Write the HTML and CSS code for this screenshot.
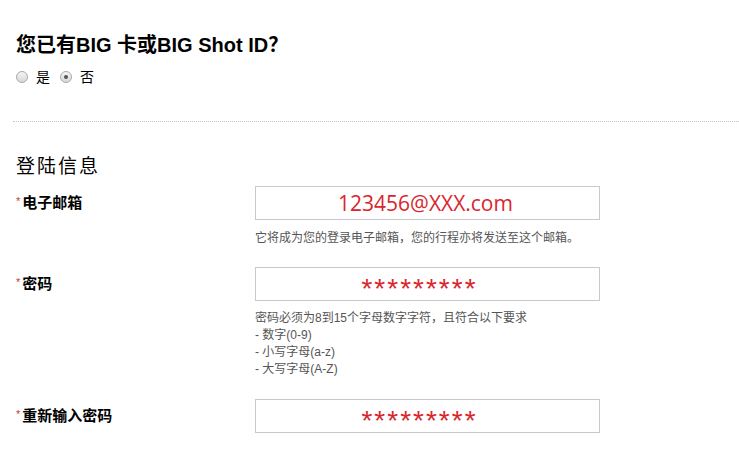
FILE: index.html
```html
<!DOCTYPE html>
<html lang="zh">
<head>
<meta charset="utf-8">
<link rel="stylesheet" href="styles.css">
</head>
<body>
<div class="page">
  <section class="question">
    <h2 class="q-title">您已有BIG 卡或BIG Shot ID？</h2>
    <div class="radios">
      <label class="radio"><span class="dot"></span><span class="rtext">是</span></label>
      <label class="radio"><span class="dot checked"></span><span class="rtext">否</span></label>
    </div>
  </section>
  <hr class="divider">
  <section class="login">
    <h3 class="sec-title">登陆信息</h3>
    <div class="field">
      <div class="label"><span class="req">*</span>电子邮箱</div>
      <div class="control">
        <div class="input email">123456@XXX.com</div>
        <p class="help">它将成为您的登录电子邮箱，您的行程亦将发送至这个邮箱。</p>
      </div>
    </div>
    <div class="field">
      <div class="label"><span class="req">*</span>密码</div>
      <div class="control">
        <div class="input pass">*********</div>
        <ul class="help rules">
          <li>密码必须为8到15个字母数字字符，且符合以下要求</li>
          <li>- 数字(0-9)</li>
          <li>- 小写字母(a-z)</li>
          <li>- 大写字母(A-Z)</li>
        </ul>
      </div>
    </div>
    <div class="field">
      <div class="label"><span class="req">*</span>重新输入密码</div>
      <div class="control">
        <div class="input pass">*********</div>
      </div>
    </div>
  </section>
</div>
</body>
</html>
```
FILE: styles.css
```css
html, body {
  margin: 0;
  padding: 0;
  background: #fff;
}
body {
  font-family: "Liberation Sans", Arial, "Noto Sans CJK SC", sans-serif;
  color: #000;
}
.page {
  padding: 0 0 0 16px;
}
.question {
  padding-top: 33px;
}
.q-title {
  margin: 0;
  font-size: 20px;
  font-weight: bold;
  line-height: 24px;
}
.radios {
  display: flex;
  align-items: center;
  margin-top: 12px;
  height: 16px;
}
.radio {
  display: flex;
  align-items: center;
  font-size: 14px;
  margin-right: 10px;
}
.dot {
  width: 10px;
  height: 10px;
  border: 1px solid #a9a9a9;
  border-radius: 50%;
  background: linear-gradient(#f4f4f4, #d8d8d8);
  position: relative;
  margin-right: 8px;
}
.dot.checked::after {
  content: "";
  position: absolute;
  left: 3px;
  top: 3px;
  width: 4px;
  height: 4px;
  border-radius: 50%;
  background: #555;
}
.rtext {
  line-height: 16px;
}
.divider {
  border: none;
  border-top: 1px dotted #c4c4c4;
  margin: 36px 0 0 -3px;
  height: 0;
}
.sec-title {
  margin: 33px 0 0 0;
  font-size: 19px;
  font-weight: normal;
  letter-spacing: 2px;
  line-height: 24px;
}
.field {
  display: grid;
  grid-template-columns: 239px 345px;
}
.login .field:first-of-type {
  margin-top: 7px;
}
.label {
  font-size: 15px;
  font-weight: bold;
  line-height: 34px;
  padding-left: 0;
}
.req {
  color: #c23a3a;
  font-size: 11px;
  font-weight: normal;
  vertical-align: top;
  line-height: 30px;
  margin-right: 2px;
}
.input {
  box-sizing: border-box;
  height: 34px;
  border: 1px solid #c9c9c9;
  color: #d9262e;
  text-align: center;
  font-family: "Open Sans", "Liberation Sans", sans-serif;
}
.email {
  font-size: 21px;
  line-height: 32px;
  padding-right: 4px;
}
.pass {
  font-family: "Liberation Sans", Arial, sans-serif;
  font-size: 28px;
  letter-spacing: 2px;
  line-height: 42px;
  padding-right: 16px;
}
.help {
  margin: 0;
  font-size: 12px;
  color: #555;
  line-height: 17px;
}
p.help {
  margin-top: 10px;
  margin-bottom: 20px;
}
.rules {
  list-style: none;
  padding: 0;
  margin-top: 9px;
  margin-bottom: 21px;
}
```
